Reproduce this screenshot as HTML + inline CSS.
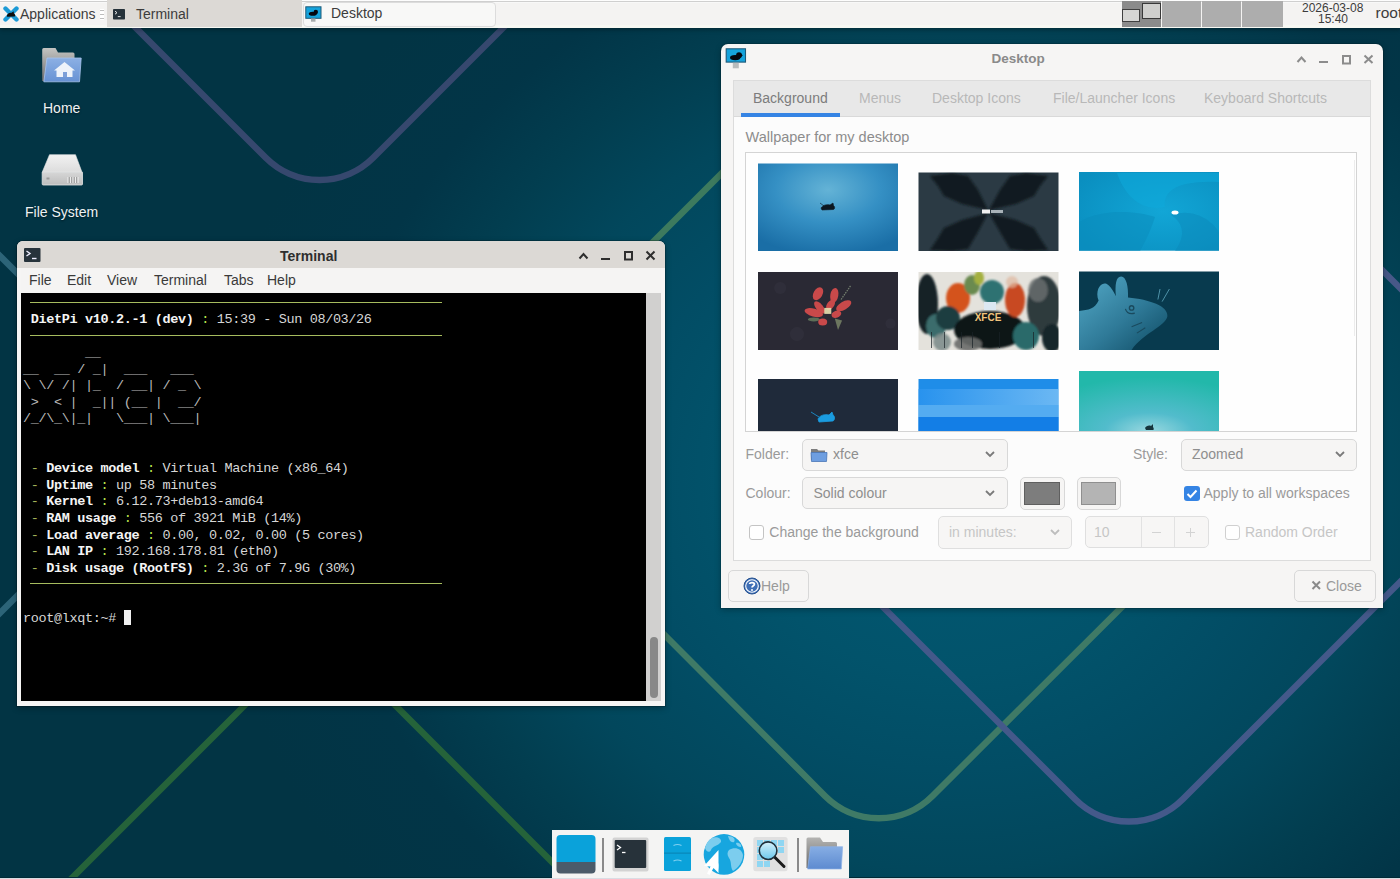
<!DOCTYPE html>
<html><head><meta charset="utf-8">
<style>
*{box-sizing:border-box;margin:0;padding:0}
html,body{width:1400px;height:879px;overflow:hidden;font-family:"Liberation Sans",sans-serif;}
body{position:relative;background:#013444;}
.abs{position:absolute}
#wall{position:absolute;left:0;top:0;width:1400px;height:879px}
/* panel */
#panel{position:absolute;left:0;top:0;width:1400px;height:28px;background:linear-gradient(#fdfdfd 0 1px,#cfcfcf 1px 2px,#f8f8f8 2px 3px,#f4f3f2 3px 25px,#f7f8f3 25px);box-shadow:0 2px 4px rgba(0,0,0,.28)}
.ptxt{position:absolute;font-size:14px;color:#3c3c3c;white-space:nowrap;line-height:16px}
/* windows */
.win{position:absolute;border-radius:6px 6px 0 0;}
.mono{font-family:"Liberation Mono",monospace}
.dlgtxt{font-size:14px;line-height:16px;color:#9a9a9a;white-space:nowrap}
.combo{background:#f6f5f4;border:1px solid #d8d8d8;border-radius:5px}
</style></head><body>
<svg id="wall" width="1400" height="879" viewBox="0 0 1400 879">
  <defs>
    <radialGradient id="bg" cx="950" cy="480" r="744" gradientUnits="userSpaceOnUse" gradientTransform="translate(950 480) scale(1 0.9) translate(-950 -480)">
      <stop offset="0" stop-color="#025a74"/>
      <stop offset="0.29" stop-color="#02536b"/>
      <stop offset="0.433" stop-color="#024d65"/>
      <stop offset="0.583" stop-color="#02475c"/>
      <stop offset="0.708" stop-color="#023e50"/>
      <stop offset="0.833" stop-color="#023547"/>
      <stop offset="1" stop-color="#023444"/>
    </radialGradient>
  </defs>
  <rect width="1400" height="879" fill="url(#bg)"/>
  <g fill="none" stroke-width="6.5" stroke-linecap="butt">
    <!-- top purple V -->
    <path d="M 60 -48 L 265.8 157.8 A 76 76 0 0 0 373.2 157.8 L 580 -49" stroke="#36486e"/>
    <!-- teal > at left -->
    <path d="M -60 196 L 124.8 380.8 A 76 76 0 0 1 124.8 488.2 L -80 693" stroke="#2c6478"/>
    <!-- green line from bottom-left -->
    <path d="M 40 910 L 266.3 683.7 A 76 76 0 0 1 373.7 683.7 L 600 910" stroke="#25633a"/>
    <!-- green line up-right top -->
    <path d="M 500 395 L 760 135" stroke="#3d7a5e"/>
    <!-- green V bottom -->
    <path d="M 560 530 L 825 796 A 76 76 0 0 0 932.5 796 L 1200 529" stroke="#3f7a66"/>
    <!-- purple V bottom -->
    <path d="M 800 524 L 1075 799 A 76 76 0 0 0 1183 799 L 1450 532" stroke="#44598a"/>
    <!-- right lavender -->
    <path d="M 1300 188 L 1450 338" stroke="#475888"/>
  </g>
</svg>

<!-- bottom line -->
<div class="abs" style="left:0;top:877px;width:1400px;height:2px;background:#d9dde4;border-top:1px solid #022a36"></div>


<!-- desktop icons -->
<svg class="abs" style="left:41px;top:47px" width="42" height="36" viewBox="0 0 42 36">
  <defs><linearGradient id="fb" x1="0" y1="0" x2="0" y2="1"><stop offset="0" stop-color="#8cb0e4"/><stop offset="1" stop-color="#6792d4"/></linearGradient>
  <linearGradient id="fg" x1="0" y1="0" x2="0" y2="1"><stop offset="0" stop-color="#c4c4c2"/><stop offset="1" stop-color="#6e6e6e"/></linearGradient></defs>
  <path d="M1.2 2.5 Q1.2 1 2.7 1 H14.5 L17 5.5 H32 Q33.5 5.5 33.5 7 V34 H1.2Z" fill="url(#fg)"/>
  <path d="M6 11 H40.2 L38.5 34.8 H2.8Z" fill="url(#fb)" stroke="#a9c4ec" stroke-width="0.8"/>
  <path d="M23.5 15 L13 23.5 H15.5 V30 H31.5 V23.5 H34Z" fill="#eef3fa"/>
  <rect x="22" y="25" width="4" height="5" fill="#7c9fd8"/>
</svg>
<div class="abs" style="left:43px;top:99.5px;font-size:14px;line-height:16px;color:#eef2f4;text-shadow:0 1px 2px rgba(0,0,0,.5)">Home</div>
<svg class="abs" style="left:40px;top:152px" width="45" height="36" viewBox="0 0 45 36">
  <defs><linearGradient id="hd" x1="0" y1="0" x2="0" y2="1"><stop offset="0" stop-color="#f2f2f2"/><stop offset="1" stop-color="#dcdcdc"/></linearGradient>
  <linearGradient id="hf" x1="0" y1="0" x2="0" y2="1"><stop offset="0" stop-color="#d6d6d6"/><stop offset="1" stop-color="#bdbdbd"/></linearGradient></defs>
  <path d="M9.5 2.7 H35.5 L42 20.3 H2.2Z" fill="url(#hd)" stroke="#e8e8e8" stroke-width="0.6"/>
  <path d="M2.2 20.3 H42.5 V32 Q42.5 33 41.5 33 H3.2 Q2.2 33 2.2 32Z" fill="url(#hf)" stroke="#e6e6e6" stroke-width="0.8"/>
  <path d="M28 25 V31 M30.5 25 V31 M33 25 V31 M35.5 25 V31 M38 25 V31" stroke="#ececec" stroke-width="1.2"/>
  <path d="M29.2 25 V31 M31.7 25 V31 M34.2 25 V31 M36.7 25 V31" stroke="#8a8a8a" stroke-width="0.8"/>
  <rect x="6.5" y="25.5" width="3" height="2" fill="#9a9a9a"/>
</svg>
<div class="abs" style="left:25px;top:203.5px;font-size:14px;line-height:16px;color:#eef2f4;text-shadow:0 1px 2px rgba(0,0,0,.5)">File System</div>


<!-- terminal window -->
<div class="abs" style="left:17px;top:241px;width:648px;height:465px;background:#f6f5f4;border-radius:6px 6px 0 0;box-shadow:0 0 0 1px rgba(0,0,0,.18),0 2px 6px rgba(0,0,0,.3)"></div>
<div class="abs" style="left:17px;top:241px;width:648px;height:27px;background:#dcd9d5;border-radius:6px 6px 0 0"></div>
<svg class="abs" style="left:24px;top:248px" width="17" height="14" viewBox="0 0 17 14"><rect x="0" y="0" width="16.5" height="14" rx="1" fill="#27333b"/><path d="M2.5 3 L6 5.5 L2.5 8" stroke="#eef" stroke-width="1.4" fill="none"/><path d="M8 10.5 H12.5" stroke="#eef" stroke-width="1.4"/></svg>
<div class="abs" style="left:280px;top:247.5px;font-size:14px;line-height:16px;font-weight:bold;color:#2e2e2e">Terminal</div>
<svg class="abs" style="left:575px;top:248px" width="85" height="16" viewBox="0 0 85 16">
  <g stroke="#2e2e2e" stroke-width="2" fill="none">
    <path d="M4.5 10.5 L8.5 6 L12.5 10.5"/>
    <path d="M26 11 H35"/>
    <rect x="50" y="4" width="7" height="7.5"/>
    <path d="M71.5 3.5 L79.5 11.5 M79.5 3.5 L71.5 11.5"/>
  </g>
</svg>
<div class="abs" style="left:21px;top:268px;width:640px;height:25px;background:#f5f4f3"></div>
<div class="abs" style="top:272px;left:29px;font-size:14px;line-height:16px;color:#3a3a3a;white-space:nowrap">
  <span class="abs" style="left:0">File</span><span class="abs" style="left:38px">Edit</span><span class="abs" style="left:78px">View</span><span class="abs" style="left:125px">Terminal</span><span class="abs" style="left:195px">Tabs</span><span class="abs" style="left:238px">Help</span>
</div>
<div class="abs" style="left:21px;top:293px;width:625px;height:408px;background:#000"></div>
<div class="abs" style="left:646px;top:293px;width:15px;height:408px;background:#d1d0cf"></div>
<div class="abs" style="left:650px;top:637px;width:7.5px;height:61px;background:#888;border-radius:4px"></div>
<div class="abs" style="left:30px;top:301.5px;width:412px;height:1.3px;background:#a6bc5e"></div>
<div class="abs" style="left:30px;top:334.8px;width:412px;height:1.3px;background:#a6bc5e"></div>
<div class="abs" style="left:30px;top:582.7px;width:412px;height:1.3px;background:#a6bc5e"></div>
<div id="tt" class="abs mono" style="left:23px;top:295.2px;font-size:13.5px;letter-spacing:-0.355px;line-height:16.6px;color:#d6d6d6;white-space:pre">
 <b style="color:#f4f4f4">DietPi v10.2.-1 (dev)</b> <span style="color:#b9e24e">:</span> 15:39 - Sun 08/03/26

<span style="color:#b8b8b8">        __</span>
<span style="color:#b8b8b8">__  __ / _|  ___   ___</span>
<span style="color:#b8b8b8">\ \/ /| |_  / __| / _ \</span>
<span style="color:#b8b8b8"> &gt;  &lt; |  _|| (__ |  __/</span>
<span style="color:#b8b8b8">/_/\_\|_|   \___| \___|</span>


 <span style="color:#a3b35a">-</span> <b style="color:#f4f4f4">Device model</b> <span style="color:#b9e24e">:</span> Virtual Machine (x86_64)
 <span style="color:#a3b35a">-</span> <b style="color:#f4f4f4">Uptime</b> <span style="color:#b9e24e">:</span> up 58 minutes
 <span style="color:#a3b35a">-</span> <b style="color:#f4f4f4">Kernel</b> <span style="color:#b9e24e">:</span> 6.12.73+deb13-amd64
 <span style="color:#a3b35a">-</span> <b style="color:#f4f4f4">RAM usage</b> <span style="color:#b9e24e">:</span> 556 of 3921 MiB (14%)
 <span style="color:#a3b35a">-</span> <b style="color:#f4f4f4">Load average</b> <span style="color:#b9e24e">:</span> 0.00, 0.02, 0.00 (5 cores)
 <span style="color:#a3b35a">-</span> <b style="color:#f4f4f4">LAN IP</b> <span style="color:#b9e24e">:</span> 192.168.178.81 (eth0)
 <span style="color:#a3b35a">-</span> <b style="color:#f4f4f4">Disk usage (RootFS)</b> <span style="color:#b9e24e">:</span> 2.3G of 7.9G (30%)


root@lxqt:~# <span style="display:inline-block;width:7.5px;height:15px;background:#f0f0f0;vertical-align:-3px"></span></div>


<!-- desktop dialog -->
<div class="abs" style="left:721px;top:44px;width:662px;height:564px;background:#f6f5f4;border-radius:7px 7px 0 0;box-shadow:0 0 0 1px rgba(0,0,0,.12),0 2px 6px rgba(0,0,0,.28)"></div>
<svg class="abs" style="left:725px;top:47px" width="22" height="22" viewBox="0 0 22 22">
  <rect x="1.2" y="1.8" width="19.3" height="13.3" fill="#15a3dc" stroke="#1e5a78" stroke-width="1.1"/>
  <ellipse cx="10.2" cy="10.6" rx="5.2" ry="2.6" fill="#050810"/>
  <circle cx="14" cy="8.2" r="2.9" fill="#050810"/>
  <path d="M15.5 6 L17.8 8.6 L15.6 10Z" fill="#050810"/>
  <rect x="7.8" y="15.8" width="6" height="5.5" fill="#b8bcbd"/>
</svg>
<div class="abs" style="left:991.5px;top:50.5px;font-size:13.5px;line-height:16px;font-weight:bold;color:#8a8a8a">Desktop</div>
<svg class="abs" style="left:1292px;top:50px" width="86" height="18" viewBox="0 0 86 18">
  <g stroke="#8c8c8c" stroke-width="2" fill="none">
    <path d="M5.5 12 L9.5 7.5 L13.5 12"/>
    <path d="M27 12 H36"/>
    <rect x="51" y="6" width="7" height="7.5"/>
    <path d="M72.5 5.5 L80.5 13 M80.5 5.5 L72.5 13"/>
  </g>
</svg>
<!-- notebook -->
<div class="abs" style="left:733px;top:80px;width:638px;height:481px;background:#fcfcfc;border:1px solid #dcdcdc"></div>
<div class="abs" style="left:734px;top:81px;width:636px;height:36px;background:#e8e8e8;border-bottom:1px solid #d9d9d9"></div>
<div class="abs" style="left:741px;top:113px;width:99px;height:4px;background:#3584e4"></div>
<div class="abs" style="top:90px;left:0;font-size:14px;line-height:16px;color:#b8b8b8;white-space:nowrap">
  <span class="abs" style="left:753px;color:#7c7c7c">Background</span>
  <span class="abs" style="left:859px">Menus</span>
  <span class="abs" style="left:932px">Desktop Icons</span>
  <span class="abs" style="left:1053px">File/Launcher Icons</span>
  <span class="abs" style="left:1204px">Keyboard Shortcuts</span>
</div>
<div class="abs" style="left:745.5px;top:129px;font-size:14.5px;line-height:16px;color:#8c8c8c;white-space:nowrap">Wallpaper for my desktop</div>
<!-- listbox -->
<div class="abs" style="left:745px;top:152px;width:612px;height:280px;background:#fefefe;border:1px solid #d4d4d4;overflow:hidden">
  <svg class="abs" style="left:0;top:0" width="610" height="278" viewBox="1 1 610 278">
<defs>
  <filter id="soft2" x="-20%" y="-20%" width="140%" height="140%"><feGaussianBlur stdDeviation="1.3"/></filter>
  <filter id="soft" x="-20%" y="-20%" width="140%" height="140%"><feGaussianBlur stdDeviation="2"/></filter>
  <radialGradient id="t1" cx="0.5" cy="0.3" r="0.75"><stop offset="0" stop-color="#64b3d6"/><stop offset="0.5" stop-color="#3590c4"/><stop offset="1" stop-color="#1a6ea6"/></radialGradient>
  <radialGradient id="t3" cx="0.6" cy="0.5" r="0.7"><stop offset="0" stop-color="#12a6d6"/><stop offset="1" stop-color="#0a8fc0"/></radialGradient>
  <radialGradient id="t4" cx="0.5" cy="0.5" r="0.7"><stop offset="0" stop-color="#35323c"/><stop offset="1" stop-color="#2b2a33"/></radialGradient>
  <linearGradient id="t6m" x1="0" y1="0" x2="1" y2="0.3"><stop offset="0" stop-color="#3c8cab"/><stop offset="1" stop-color="#2f7897"/></linearGradient>
  <linearGradient id="t8" x1="0" y1="0" x2="1" y2="0"><stop offset="0" stop-color="#2c95f0"/><stop offset="1" stop-color="#8ccaf8"/></linearGradient>
  <radialGradient id="t9" cx="0.5" cy="1" r="0.9"><stop offset="0" stop-color="#9ad8e0"/><stop offset="0.35" stop-color="#52bccc"/><stop offset="1" stop-color="#22b8aa"/></radialGradient>
</defs>
<!-- 1 -->
<rect x="13" y="11.5" width="140" height="87.5" fill="url(#t1)"/>
<path d="M76 56 C78 53 82 52 85 53 L88 51 L88.5 53.5 C90 54.5 90 57 88.5 57.5 L77 58Z M75 51 L79 54" fill="#0b1620" stroke="#0b1620" stroke-width="0.6"/>
<!-- 2 -->
<rect x="173.5" y="20.5" width="140" height="78.5" fill="#2b3a44"/>
<clipPath id="c2"><rect x="173.5" y="20.5" width="140" height="78.5"/></clipPath><g clip-path="url(#c2)"><g fill="#11181c" opacity="0.85" filter="url(#soft2)">
<polygon points="243.0,58.0 233.0,38.0 223.0,24.0 207.0,21.0 185.0,24.0 193.0,34.0 199.0,44.0 217.0,52.0"/>
<polygon points="244.0,58.0 255.0,38.0 265.0,24.0 281.0,21.0 303.0,24.0 295.0,34.0 289.0,44.0 271.0,52.0"/>
<polygon points="243.0,61.0 217.0,68.0 199.0,76.0 193.0,86.0 185.0,98.0 207.0,99.0 223.0,97.0 233.0,80.0"/>
<polygon points="244.0,61.0 271.0,68.0 289.0,76.0 295.0,86.0 303.0,98.0 281.0,99.0 265.0,97.0 255.0,80.0"/>
</g></g>
<rect x="237" y="57.5" width="8" height="4" fill="#f0f0f0"/><rect x="246" y="58" width="12" height="3" fill="#a8b2b8"/>
<!-- 3 -->
<rect x="334" y="20" width="140" height="78.7" fill="url(#t3)"/>
<path d="M372 21 C380 45 398 60 420 55 C418 40 430 28 474 30 L474 21Z" fill="#0ea9da" opacity="0.55"/>
<path d="M334 70 C360 55 395 60 410 65 C405 80 400 90 395 99 L334 99Z" fill="#0a8cbc" opacity="0.5"/>
<path d="M426 63 C450 55 468 70 474 80 L474 99 L430 99 C440 85 440 72 426 63Z" fill="#0a88b8" opacity="0.45"/>
<ellipse cx="430" cy="60.5" rx="3.5" ry="2" fill="#fff"/>
<!-- 4 -->
<rect x="13" y="120" width="140" height="78" fill="#2a2934"/>
<g opacity="0.35" fill="#3a3946"><circle cx="35.2" cy="135.9" r="6"/><circle cx="52.0" cy="182.1" r="7"/><circle cx="145.5" cy="171.6" r="5"/></g>
<path d="M89.8 166.4 L97.1 168.5 L93.0 177.9 Z" fill="#7d8a6a" opacity="0.8"/>
<ellipse cx="68.8" cy="167.4" rx="6" ry="2" fill="#6a8060" opacity="0.8"/>
<path d="M96.1 147.5 L105.5 133.9" stroke="#8a9a80" stroke-width="1.2" stroke-dasharray="1.5 1" opacity="0.8"/>
<ellipse cx="73.0" cy="141.7" rx="7.0" ry="4.5" fill="#c9494a" transform="rotate(-60 73.0 141.7)"/>
<ellipse cx="89.3" cy="143.3" rx="7.5" ry="4.0" fill="#c9494a" transform="rotate(-80 89.3 143.3)"/>
<ellipse cx="98.7" cy="153.8" rx="8.5" ry="4.0" fill="#c9494a" transform="rotate(-30 98.7 153.8)"/>
<ellipse cx="68.8" cy="160.6" rx="9.5" ry="4.0" fill="#c9494a" transform="rotate(15 68.8 160.6)"/>
<ellipse cx="74.6" cy="155.4" rx="7.5" ry="3.5" fill="#c9494a" transform="rotate(50 74.6 155.4)"/>
<ellipse cx="77.7" cy="170.1" rx="4.5" ry="3.5" fill="#c9494a" transform="rotate(0 77.7 170.1)"/>
<ellipse cx="91.4" cy="162.2" rx="5.0" ry="3.5" fill="#c9494a" transform="rotate(-20 91.4 162.2)"/>
<ellipse cx="85.6" cy="152.8" rx="6.0" ry="3.5" fill="#c9494a" transform="rotate(-55 85.6 152.8)"/>
<rect x="79.3" y="155.9" width="7" height="6" fill="#e8e0b0" opacity="0.9"/>
<!-- 5 -->
<clipPath id="c5"><rect x="173.5" y="120" width="140" height="78"/></clipPath>
<rect x="173.5" y="120.0" width="140.0" height="78.0" fill="#e4e2dc" opacity="1"/>
<g clip-path="url(#c5)"><g filter="url(#soft2)"><ellipse cx="182.0" cy="152.0" rx="11.0" ry="30.0" fill="#142226" opacity="1"/><ellipse cx="191.0" cy="174.0" rx="10.0" ry="12.0" fill="#3a6c6c" opacity="1"/><ellipse cx="197.0" cy="190.0" rx="9.0" ry="9.0" fill="#7f8e8c" opacity="0.9"/><ellipse cx="213.0" cy="146.0" rx="12.0" ry="15.0" fill="#d4521e" opacity="1"/><ellipse cx="203.0" cy="166.0" rx="12.0" ry="12.0" fill="#1f3e40" opacity="1"/><ellipse cx="227.0" cy="133.0" rx="8.0" ry="10.0" fill="#6a8a50" opacity="1"/><ellipse cx="234.0" cy="126.0" rx="5.0" ry="7.0" fill="#a4b040" opacity="1"/><ellipse cx="247.0" cy="140.0" rx="12.0" ry="12.0" fill="#2f7272" opacity="1"/><ellipse cx="245.0" cy="178.0" rx="36.0" ry="19.0" fill="#0f1719" opacity="1"/><ellipse cx="270.0" cy="148.0" rx="10.0" ry="17.0" fill="#c84a20" opacity="1"/><ellipse cx="267.0" cy="130.0" rx="6.0" ry="6.0" fill="#e0b8a0" opacity="0.7"/><ellipse cx="299.0" cy="154.0" rx="17.0" ry="30.0" fill="#2e3a3c" opacity="1"/><ellipse cx="293.0" cy="138.0" rx="10.0" ry="12.0" fill="#6a7070" opacity="0.8"/><ellipse cx="281.0" cy="184.0" rx="13.0" ry="14.0" fill="#2a6a6a" opacity="1"/><ellipse cx="307.0" cy="186.0" rx="10.0" ry="14.0" fill="#18262a" opacity="1"/><ellipse cx="223.0" cy="192.0" rx="14.0" ry="7.0" fill="#6a6c6a" opacity="0.9"/></g>
<rect x="186.0" y="180.0" width="1" height="16" fill="#1a2226" opacity="0.7"/>
<rect x="199.0" y="180.0" width="1" height="16" fill="#1a2226" opacity="0.7"/>
<rect x="216.0" y="180.0" width="1" height="16" fill="#1a2226" opacity="0.7"/>
<rect x="227.0" y="180.0" width="1" height="16" fill="#1a2226" opacity="0.7"/>
<rect x="254.0" y="180.0" width="1" height="16" fill="#1a2226" opacity="0.7"/>
<rect x="288.0" y="180.0" width="1" height="16" fill="#1a2226" opacity="0.7"/>
</g>
<rect x="239.0" y="150.0" width="12.0" height="8.0" fill="#dce8f2" opacity="1"/>
<text x="243" y="169" font-family="Liberation Sans" font-weight="bold" font-size="10" fill="#f2c47c" text-anchor="middle">XFCE</text>
<!-- 6 -->
<linearGradient id="t6g" x1="0" y1="0" x2="1" y2="1"><stop offset="0" stop-color="#54aac8"/><stop offset="0.55" stop-color="#2f7a98"/><stop offset="1" stop-color="#0e4a62"/></linearGradient>
<rect x="334" y="119.5" width="140" height="78.5" fill="#083a4e"/>
<path d="M334.1 197.9 L334.1 159.1 C343.6 158.0 349.9 156.9 353.6 148.6 C349.9 139.1 355.1 129.7 361.4 131.8 C365.6 133.8 368.8 140.2 370.9 144.3 C369.9 132.8 370.9 124.4 376.1 124.4 C381.4 124.4 383.5 134.9 383.0 145.4 C404.5 147.5 423.4 153.8 422.4 164.3 C420.2 174.8 398.2 181.1 386.6 197.9 L334.1 197.9 Z" fill="url(#t6g)"/>
<circle cx="386.6" cy="155.9" r="2.2" fill="none" stroke="#1a4a5e" stroke-width="1.4"/>
<path d="M380.4 156.9 Q382.4 163.2 389.8 161.2" stroke="#1a4a5e" stroke-width="1.2" fill="none"/>
<path d="M386.6 174.8 L397.1 170.6 M391.9 181.1 L400.3 175.8" stroke="#1a4a5e" stroke-width="1.1"/>
<path d="M412.9 147.5 L415.0 137.0 M417.1 149.6 L424.4 137.0" stroke="#4e92a8" stroke-width="1"/>
<!-- 7 -->
<rect x="13" y="227" width="140" height="53" fill="#1f2a3a"/>
<path d="M73 267 C75 263 80 262 84 263 L87 260 L88 263 C90 264 90 268 88 269 L74 270Z M66 260 L74 265" fill="#1a9ce0" stroke="#1a9ce0" stroke-width="0.8"/>
<!-- 8 -->
<rect x="173.5" y="227" width="140" height="53" fill="#1f8de8"/>
<rect x="173.5" y="237" width="140" height="16" fill="url(#t8)" opacity="0.7"/>
<rect x="173.5" y="253" width="140" height="12" fill="#5eb2f2" opacity="0.85"/>
<rect x="173.5" y="265" width="140" height="15" fill="#137ee6"/>
<!-- 9 -->
<rect x="334" y="219" width="140" height="61" fill="url(#t9)"/>
<path d="M400 276 C401 274 404 273 406 274 L408 272 L408 275 C409 276 409 278 408 278 L401 278Z" fill="#16343c"/>
</svg>
</div>
<div class="abs" style="left:1354px;top:160px;width:1px;height:176px;background:#ececec"></div>
<!-- form -->
<div class="dlgtxt abs" style="left:745.5px;top:445.5px">Folder:</div>
<div class="combo abs" style="left:802px;top:438.5px;width:205.5px;height:32px"></div>
<svg class="abs" style="left:810px;top:447px" width="18" height="16" viewBox="0 0 18 16"><path d="M1 2 H7 L8.5 3.5 H15 V13 H1Z" fill="#7d7d7d"/><path d="M1 5.5 H17 L16.5 14.5 H1.5Z" fill="#6e9ee0" stroke="#4a76b6" stroke-width="0.8"/></svg>
<div class="dlgtxt abs" style="left:833px;top:445.5px;color:#8e8e8e">xfce</div>
<svg class="abs chev" style="left:984px;top:450px" width="12" height="8" viewBox="0 0 12 8"><path d="M2 2 L6 6 L10 2" stroke="#7a7a7a" stroke-width="1.8" fill="none"/></svg>

<div class="dlgtxt abs" style="left:1133px;top:445.5px">Style:</div>
<div class="combo abs" style="left:1180.5px;top:438.5px;width:176.5px;height:32px"></div>
<div class="dlgtxt abs" style="left:1192px;top:445.5px;color:#8e8e8e">Zoomed</div>
<svg class="abs" style="left:1334px;top:450px" width="12" height="8" viewBox="0 0 12 8"><path d="M2 2 L6 6 L10 2" stroke="#7a7a7a" stroke-width="1.8" fill="none"/></svg>

<div class="dlgtxt abs" style="left:745.5px;top:484.7px">Colour:</div>
<div class="combo abs" style="left:802px;top:477.3px;width:205.5px;height:32px"></div>
<div class="dlgtxt abs" style="left:813.5px;top:484.7px;color:#8e8e8e">Solid colour</div>
<svg class="abs" style="left:984px;top:489px" width="12" height="8" viewBox="0 0 12 8"><path d="M2 2 L6 6 L10 2" stroke="#7a7a7a" stroke-width="1.8" fill="none"/></svg>
<div class="combo abs" style="left:1020px;top:477px;width:44.5px;height:32.5px"></div>
<div class="abs" style="left:1024px;top:481.5px;width:35.5px;height:23.5px;background:#7d7d7d;border:1px solid #5f5f5f"></div>
<div class="combo abs" style="left:1076.5px;top:477px;width:44px;height:32.5px"></div>
<div class="abs" style="left:1081px;top:481.5px;width:35px;height:23.5px;background:#b4b4b4;border:1px solid #8f8f8f"></div>
<div class="abs" style="left:1184px;top:485.5px;width:15.5px;height:15.5px;background:#3584e4;border-radius:3px"></div>
<svg class="abs" style="left:1184px;top:485.5px" width="16" height="16" viewBox="0 0 16 16"><path d="M3.5 8 L6.5 11 L12.5 4.5" stroke="#fff" stroke-width="2" fill="none"/></svg>
<div class="dlgtxt abs" style="left:1203.5px;top:484.7px">Apply to all workspaces</div>

<div class="abs" style="left:749.3px;top:525px;width:15px;height:15px;background:#fff;border:1px solid #c4c4c4;border-radius:3px"></div>
<div class="dlgtxt abs" style="left:769.3px;top:523.5px">Change the background</div>
<div class="combo abs" style="left:938px;top:516px;width:134px;height:32.5px;opacity:.8"></div>
<div class="dlgtxt abs" style="left:949px;top:523.5px;color:#c6c6c6">in minutes:</div>
<svg class="abs" style="left:1049px;top:528px" width="12" height="8" viewBox="0 0 12 8"><path d="M2 2 L6 6 L10 2" stroke="#bdbdbd" stroke-width="1.8" fill="none"/></svg>
<div class="combo abs" style="left:1085px;top:515.7px;width:123.5px;height:32px;opacity:.8"></div>
<div class="abs" style="left:1140.5px;top:516px;width:1px;height:31px;background:#e2e2e2"></div>
<div class="abs" style="left:1174px;top:516px;width:1px;height:31px;background:#e2e2e2"></div>
<div class="dlgtxt abs" style="left:1094px;top:523.5px;color:#c6c6c6">10</div>
<div class="abs" style="left:1152px;top:531.5px;width:9px;height:1px;background:#d3d3d3"></div>
<div class="abs" style="left:1186px;top:531.5px;width:9px;height:1px;background:#d3d3d3"></div>
<div class="abs" style="left:1190px;top:527.5px;width:1px;height:9px;background:#d3d3d3"></div>
<div class="abs" style="left:1225px;top:524.5px;width:15px;height:15px;background:#fff;border:1px solid #d0d0d0;border-radius:3px"></div>
<div class="dlgtxt abs" style="left:1245px;top:523.5px;color:#c6c6c6">Random Order</div>
<!-- bottom buttons -->
<div class="combo abs" style="left:727.5px;top:570px;width:81.5px;height:32px"></div>
<svg class="abs" style="left:743px;top:576.5px" width="18" height="18" viewBox="0 0 18 18"><circle cx="9" cy="9" r="8" fill="#3f6fb6" stroke="#24508e" stroke-width="1"/><circle cx="9" cy="9" r="6.3" fill="none" stroke="#fff" stroke-width="1.1"/><path d="M6.6 7 C6.6 5.2 11.4 5.2 11.4 7.2 C11.4 8.7 9 8.8 9 10.6" stroke="#fff" stroke-width="1.7" fill="none"/><circle cx="9" cy="12.9" r="1" fill="#fff"/></svg>
<div class="dlgtxt abs" style="left:761px;top:577.5px">Help</div>
<div class="combo abs" style="left:1294px;top:570px;width:82px;height:32px"></div>
<svg class="abs" style="left:1311px;top:580px" width="11" height="11" viewBox="0 0 11 11"><path d="M1.5 1.5 L9 9 M9 1.5 L1.5 9" stroke="#8a8a8a" stroke-width="2"/></svg>
<div class="dlgtxt abs" style="left:1326px;top:577.5px">Close</div>


<!-- dock -->
<div class="abs" style="left:552px;top:830px;width:297px;height:48px;background:#f4f4f3"></div>
<svg class="abs" style="left:552px;top:830px" width="297" height="48" viewBox="552 830 297 48">
  <defs>
    <linearGradient id="fold" x1="0" y1="0" x2="0" y2="1"><stop offset="0" stop-color="#86ade4"/><stop offset="1" stop-color="#5d8bd0"/></linearGradient>
    <linearGradient id="mag" x1="0" y1="0" x2="0" y2="1"><stop offset="0" stop-color="#d4f0fb"/><stop offset="1" stop-color="#6cc8ec"/></linearGradient>
  </defs>
  <!-- show desktop -->
  <path d="M556.5 839 Q556.5 835 560.5 835 H591.5 Q595.5 835 595.5 839 V862 H556.5Z" fill="#0aa2da"/>
  <path d="M556.5 862 H595.5 V869.5 Q595.5 873.5 591.5 873.5 H560.5 Q556.5 873.5 556.5 869.5Z" fill="#4b5b69"/>
  <rect x="602" y="838" width="2" height="34" fill="#8a8a8a"/>
  <!-- terminal -->
  <rect x="612.5" y="837.5" width="36" height="34" rx="2" fill="#d3d3d3"/>
  <rect x="614.7" y="839.9" width="31.5" height="28" rx="1" fill="#27323a"/>
  <path d="M617 845 L620.5 847.5 L617 850" stroke="#fff" stroke-width="1.3" fill="none"/>
  <path d="M622 852.5 H625.5" stroke="#fff" stroke-width="1.3"/>
  <!-- cabinet -->
  <rect x="664" y="837" width="27" height="34" rx="1.5" fill="#0aa2da"/>
  <rect x="664" y="852.5" width="27" height="1.2" fill="#0887b8"/>
  <path d="M673.5 845.5 Q677.5 843.5 681.5 845.5 M673.5 861 Q677.5 859 681.5 861" stroke="#7fd0f0" stroke-width="1.2" fill="none"/>
  <!-- globe -->
  <circle cx="724" cy="854.4" r="20.3" fill="#17a6df"/>
  <path d="M712 838 C716 836 722 838 721 842 C718 846 712 846 711 850 C710 853 706 852 705 848 C706 844 708 840 712 838Z" fill="#7ccdee"/>
  <path d="M728 836 C733 836 736 839 734 842 C731 843 729 840 728 836Z" fill="#7ccdee"/>
  <path d="M729 850 C735 846 742 849 743 855 C743 862 738 868 733 871 C730 867 732 862 729 858 C727 855 727 852 729 850Z" fill="#7ccdee"/>
  <path d="M736 843 C739 842 742 845 741 847 C738 847 736 845 736 843Z" fill="#7ccdee"/>
  <path d="M716 862 C719 862 720 866 718 870 C715 869 713 866 716 862Z" fill="#7ccdee"/>
  <path d="M718.5 850 L718.5 873 L713.5 868 L709.5 875 L707 873.5 L710.5 866.5 L704 866Z" fill="#fff"/>
  <!-- search -->
  <rect x="753.3" y="837" width="34.3" height="34.3" rx="2.5" fill="#e0e0e0"/>
  <g fill="#8fd6f2">
    <rect x="757" y="840" width="6" height="6"/><rect x="764" y="840" width="6" height="6"/><rect x="771" y="840" width="6" height="6"/><rect x="778" y="840" width="6" height="6"/>
    <rect x="757" y="847" width="6" height="6"/><rect x="778" y="847" width="6" height="6"/>
    <rect x="757" y="854" width="6" height="6"/><rect x="757" y="861" width="6" height="6"/><rect x="764" y="861" width="6" height="6"/>
  </g>
  <path d="M774.5 857 L784 866.5" stroke="#1a1a1a" stroke-width="3" stroke-linecap="round"/>
  <circle cx="768.1" cy="850.7" r="8.8" fill="url(#mag)" stroke="#1f2f3a" stroke-width="1.6"/>
  <rect x="797" y="838" width="2" height="34" fill="#8a8a8a"/>
  <!-- folder -->
  <linearGradient id="fold2" x1="0" y1="0" x2="0" y2="1"><stop offset="0" stop-color="#b4b4b2"/><stop offset="1" stop-color="#6a6a6a"/></linearGradient>
  <path d="M806.5 839 Q806.5 837.5 808 837.5 H820 L823 842 H835.5 Q837 842 837 843.5 V868 H806.5Z" fill="url(#fold2)"/>
  <path d="M810.5 846.7 H842.6 L841.3 869 H807.6Z" fill="url(#fold)" stroke="#8eb2e6" stroke-width="0.7"/>
</svg>

<div id="panel">
  <!-- xfce logo -->
  <svg class="abs" style="left:2.5px;top:5.5px" width="16" height="16" viewBox="0 0 16 16">
    <path d="M2.5 2.5 L13.5 13.5 M13.5 2.5 L2.5 13.5" stroke="#1b9ad6" stroke-width="4.4" stroke-linecap="round"/>
    <path d="M3.8 10.2 C4 7.6 6.2 6.4 8.6 6.8 L10.6 5.2 L10.9 7.4 C12.4 8 12.6 10 11.6 10.6 L4.4 10.8 Z" fill="#0d0d0d"/>
  </svg>
  <div class="ptxt" style="left:20px;top:6px">Applications</div>
  <div class="abs" style="left:100px;top:9px;width:4px;height:11px;background:repeating-linear-gradient(#fff 0 1px,#bdbdbd 1px 2px,#fff 2px 4px)"></div>
  <div class="abs" style="left:107px;top:0px;width:195px;height:27px;background:#dcd9d5"></div>
  <svg class="abs" style="left:112.5px;top:9px" width="12" height="10.5" viewBox="0 0 12 10.5"><rect x="0" y="0" width="12" height="10.5" rx="0.8" fill="#26323a"/><path d="M2 2.2 L4 3.7 L2 5.2" stroke="#e8e8e8" stroke-width="1" fill="none"/><path d="M4.8 7.6 H7.6" stroke="#e8e8e8" stroke-width="1"/></svg>
  <div class="ptxt" style="left:136px;top:6px">Terminal</div>
  <div class="abs" style="left:303px;top:2px;width:193px;height:25px;background:#f8f8f7;border:1px solid #dcdcdc;border-radius:4px"></div>
  <svg class="abs" style="left:305px;top:6px" width="17" height="16" viewBox="0 0 17 16">
  <rect x="0.8" y="0.8" width="15.2" height="11.5" fill="#15a3dc" stroke="#1e5a78" stroke-width="1"/>
  <ellipse cx="7.8" cy="7.8" rx="4" ry="2" fill="#050810"/>
  <circle cx="10.8" cy="6" r="2.2" fill="#050810"/>
  <rect x="6" y="12.5" width="4.5" height="3.2" fill="#a8acad"/>
</svg>
  <div class="ptxt" style="left:331px;top:5px">Desktop</div>
  <!-- workspaces -->
  <div class="abs" style="left:1122px;top:1px;width:39px;height:26px;background:#8b8b8b"></div>
  <div class="abs" style="left:1122px;top:8.5px;width:18px;height:13.5px;background:#d6d6d4;border:1px solid #404040"></div>
  <div class="abs" style="left:1142px;top:2.5px;width:19px;height:16.5px;background:#cfcfcd;border:1.5px solid #383838"></div>
  <div class="abs" style="left:1162px;top:1px;width:39px;height:26px;background:#adadad"></div>
  <div class="abs" style="left:1202px;top:1px;width:39px;height:26px;background:#adadad"></div>
  <div class="abs" style="left:1242px;top:1px;width:41px;height:26px;background:#adadad"></div>
  <div class="ptxt" style="left:1302px;top:2px;font-size:12px;line-height:13px">2026-03-08</div>
  <div class="ptxt" style="left:1318px;top:12.5px;font-size:12px;line-height:13px">15:40</div>
  <div class="ptxt" style="left:1375.5px;top:5px;font-size:15.5px">root</div>
</div>

</body></html>
